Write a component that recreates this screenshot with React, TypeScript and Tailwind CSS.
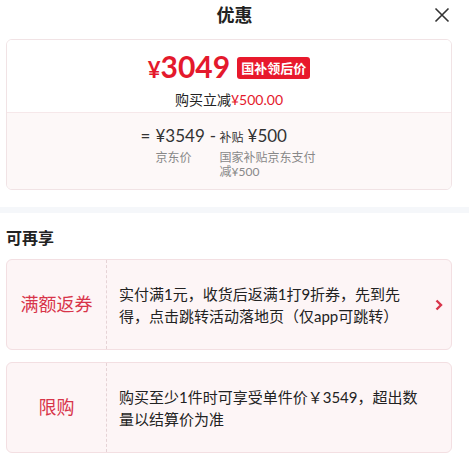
import { FC } from "react";

const font = { fontFamily: "Lato, 'Noto Sans CJK SC', sans-serif" };

const PromoCard: FC<{ label: string; text: string; arrow?: boolean }> = ({ label, text, arrow }) => (
  <div className="flex h-[91px] overflow-hidden rounded-md border border-[#f3dfe2] bg-[#fdf5f6]">
    <div className="flex w-[100px] shrink-0 items-center justify-center border-r border-dashed border-[#e6d3d6] text-[18px] text-[#d8344a]">
      {label}
    </div>
    <div className="flex flex-1 items-center pl-[12px] text-[15px] leading-[22px] text-[#222]">
      <div className="w-[310px]">{text}</div>
      {arrow && (
        <svg width="8" height="12" viewBox="0 0 8 12" className="ml-[6px]">
          <path d="M1.5 1.5 L6 6 L1.5 10.5" stroke="#d8344a" strokeWidth="2.4" fill="none" />
        </svg>
      )}
    </div>
  </div>
);

export default function App() {
  return (
    <div className="h-[459px] w-[469px] bg-white" style={font}>
      <div className="relative flex h-[30px] items-center justify-center">
        <div className="text-[18px] font-bold text-[#222]">优惠</div>
        <svg width="16" height="16" viewBox="0 0 16 16" className="absolute right-[19px] top-[7px]">
          <path d="M1.5 1.5 L14.5 14.5 M14.5 1.5 L1.5 14.5" stroke="#333" strokeWidth="1.6" />
        </svg>
      </div>

      <div className="mx-[6px] mt-[9px] w-[446px] overflow-hidden rounded-md border border-[#f1e3e5]">
        <div className="flex h-[72px] flex-col items-center bg-white pt-[8px]">
          <div className="flex items-center">
            <span className="text-[30px] font-bold leading-[36px] text-[#e4192c]">
              <span className="text-[22px]">¥</span>3049
            </span>
            <span className="ml-[7px] rounded-[3px] bg-[#e8192c] px-[4px] text-[13px] font-bold leading-[22px] text-white">国补领后价</span>
          </div>
          <div className="mt-[2px] text-[14px] leading-[20px] text-[#222]">
            购买立减<span className="text-[#e4192c]">¥500.00</span>
          </div>
        </div>
        <div className="flex h-[77px] justify-center border-t border-[#f6e8ea] bg-[#fdf8f8] pr-[2px] pt-[10px] text-[#333]">
          <div className="flex">
            <div className="w-[15px] text-[17px] leading-[26px]">=</div>
            <div className="flex flex-col">
              <div className="flex h-[26px] items-baseline text-[17px] leading-[26px]">
                <span className="w-[64px]">
                  ¥3549<span className="ml-[5px]">-</span>
                </span>
                <span className="mr-[4px] text-[12px]">补贴</span>
                <span>¥500</span>
              </div>
              <div className="mt-[2px] flex text-[12px] leading-[14px] text-[#888]">
                <span className="w-[64px]">京东价</span>
                <span className="w-[96px]">
                  国家补贴京东支付
                  <br />
                  减¥500
                </span>
              </div>
            </div>
          </div>
        </div>
      </div>

      <div className="mt-[17px] h-[6px] bg-[#f5f7fa]" />

      <div className="px-[6px] pt-[14px] text-[16px] font-bold leading-[22px] text-[#222]">可再享</div>

      <div className="flex w-[458px] flex-col gap-[12px] pl-[6px] pt-[10px]">
        <div className="w-[446px]">
          <PromoCard label="满额返券" text="实付满1元，收货后返满1打9折券，先到先得，点击跳转活动落地页（仅app可跳转）" arrow />
        </div>
        <div className="w-[446px]">
          <PromoCard label="限购" text="购买至少1件时可享受单件价￥3549，超出数量以结算价为准" />
        </div>
      </div>
    </div>
  );
}
